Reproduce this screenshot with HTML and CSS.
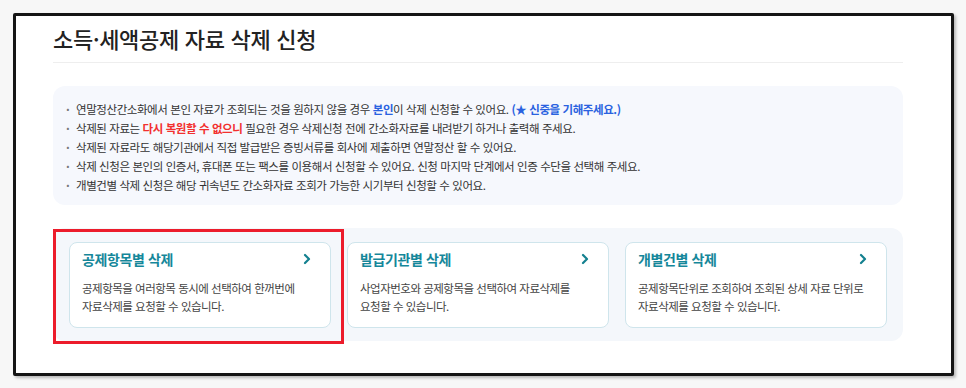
FILE: index.html
```html
<!DOCTYPE html>
<html lang="ko">
<head>
<meta charset="utf-8">
<link rel="stylesheet" href="styles.css">
</head>
<body>
<div class="frame">
  <h1 class="title">소득·세액공제 자료 삭제 신청</h1>
  <div class="notice">
    <ul>
      <li>연말정산간소화에서 본인 자료가 조회되는 것을 원하지 않을 경우 <b class="blue">본인</b>이 삭제 신청할 수 있어요. <b class="blue">(★ 신중을 기해주세요.)</b></li>
      <li>삭제된 자료는 <b class="red">다시 복원할 수 없으니</b> 필요한 경우 삭제신청 전에 간소화자료를 내려받기 하거나 출력해 주세요.</li>
      <li>삭제된 자료라도 해당기관에서 직접 발급받은 증빙서류를 회사에 제출하면 연말정산 할 수 있어요.</li>
      <li>삭제 신청은 본인의 인증서, 휴대폰 또는 팩스를 이용해서 신청할 수 있어요. 신청 마지막 단계에서 인증 수단을 선택해 주세요.</li>
      <li>개별건별 삭제 신청은 해당 귀속년도 간소화자료 조회가 가능한 시기부터 신청할 수 있어요.</li>
    </ul>
  </div>
  <div class="cards-wrap">
    <div class="cards">
      <a class="card">
        <div class="card-head"><span class="card-title">공제항목별 삭제</span>
          <svg class="chev" width="10" height="12" viewBox="0 0 10 12"><path d="M3 2l4 4-4 4" fill="none" stroke="#13808f" stroke-width="2.2" stroke-linecap="round" stroke-linejoin="round"/></svg></div>
        <p class="card-desc">공제항목을 여러항목 동시에 선택하여 한꺼번에<br>자료삭제를 요청할 수 있습니다.</p>
      </a>
      <a class="card">
        <div class="card-head"><span class="card-title">발급기관별 삭제</span>
          <svg class="chev" width="10" height="12" viewBox="0 0 10 12"><path d="M3 2l4 4-4 4" fill="none" stroke="#13808f" stroke-width="2.2" stroke-linecap="round" stroke-linejoin="round"/></svg></div>
        <p class="card-desc">사업자번호와 공제항목을 선택하여 자료삭제를<br>요청할 수 있습니다.</p>
      </a>
      <a class="card">
        <div class="card-head"><span class="card-title">개별건별 삭제</span>
          <svg class="chev" width="10" height="12" viewBox="0 0 10 12"><path d="M3 2l4 4-4 4" fill="none" stroke="#13808f" stroke-width="2.2" stroke-linecap="round" stroke-linejoin="round"/></svg></div>
        <p class="card-desc">공제항목단위로 조회하여 조회된 상세 자료 단위로<br>자료삭제를 요청할 수 있습니다.</p>
      </a>
    </div>
    <div class="highlight"></div>
  </div>
</div>
</body>
</html>
```
FILE: styles.css
```css
* { box-sizing: border-box; }
html, body { margin: 0; padding: 0; }
body {
  background: #f7f7f7;
  font-family: "Noto Sans CJK KR", "Noto Sans", sans-serif;
  color: #333;
  padding: 13px 0 0 13px;
  width: 966px;
  height: 388px;
}
.frame {
  width: 941px;
  height: 363px;
  background: #fff;
  border: 3px solid #151515;
  border-radius: 2px;
  box-shadow: 2px 2px 3px rgba(0,0,0,0.25);
  padding: 8px 48px 0 37px;
}
.title {
  margin: 0;
  font-size: 22px;
  line-height: 28px;
  font-weight: 500;
  color: #222;
  letter-spacing: -0.3px;
  padding-bottom: 10px;
  border-bottom: 1px solid #eeeeee;
}
.notice {
  margin-top: 23px;
  background: #f6f8fd;
  border-radius: 12px;
  padding: 14px 13px 10px;
}
.notice ul { margin: 0; padding: 0; list-style: none; }
.notice li {
  font-size: 11.5px;
  line-height: 19px;
  letter-spacing: -0.42px;
  color: #333;
  position: relative;
  padding-left: 10px;
}
.notice li::before {
  content: "·";
  position: absolute;
  left: 0;
  top: 0;
  color: #777;
  font-weight: 700;
}
.blue { color: #2a62e0; font-weight: 700; }
.red { color: #f2302f; font-weight: 700; }
.cards-wrap {
  position: relative;
  margin-top: 23px;
}
.cards {
  background: #f4f7fb;
  border-radius: 12px;
  padding: 14px 16px 13px;
  display: grid;
  grid-template-columns: repeat(3, 262px);
  column-gap: 16px;
}
.card {
  display: block;
  height: 86px;
  background: #fff;
  border: 1px solid #cfe5ec;
  border-radius: 8px;
  padding: 6px 18px 0 12px;
}
.card-head {
  display: flex;
  align-items: center;
  justify-content: space-between;
  height: 20px;
}
.card-title {
  font-size: 14px;
  font-weight: 700;
  color: #15879a;
  letter-spacing: -0.4px;
}
.chev { display: block; }
.card-desc {
  margin: 10px 0 0;
  font-size: 11.5px;
  line-height: 18px;
  color: #444;
  letter-spacing: -0.5px;
}
.highlight {
  position: absolute;
  left: 0;
  top: 1px;
  width: 291px;
  height: 115px;
  border: 3px solid #ec1c2b;
  pointer-events: none;
}
```
